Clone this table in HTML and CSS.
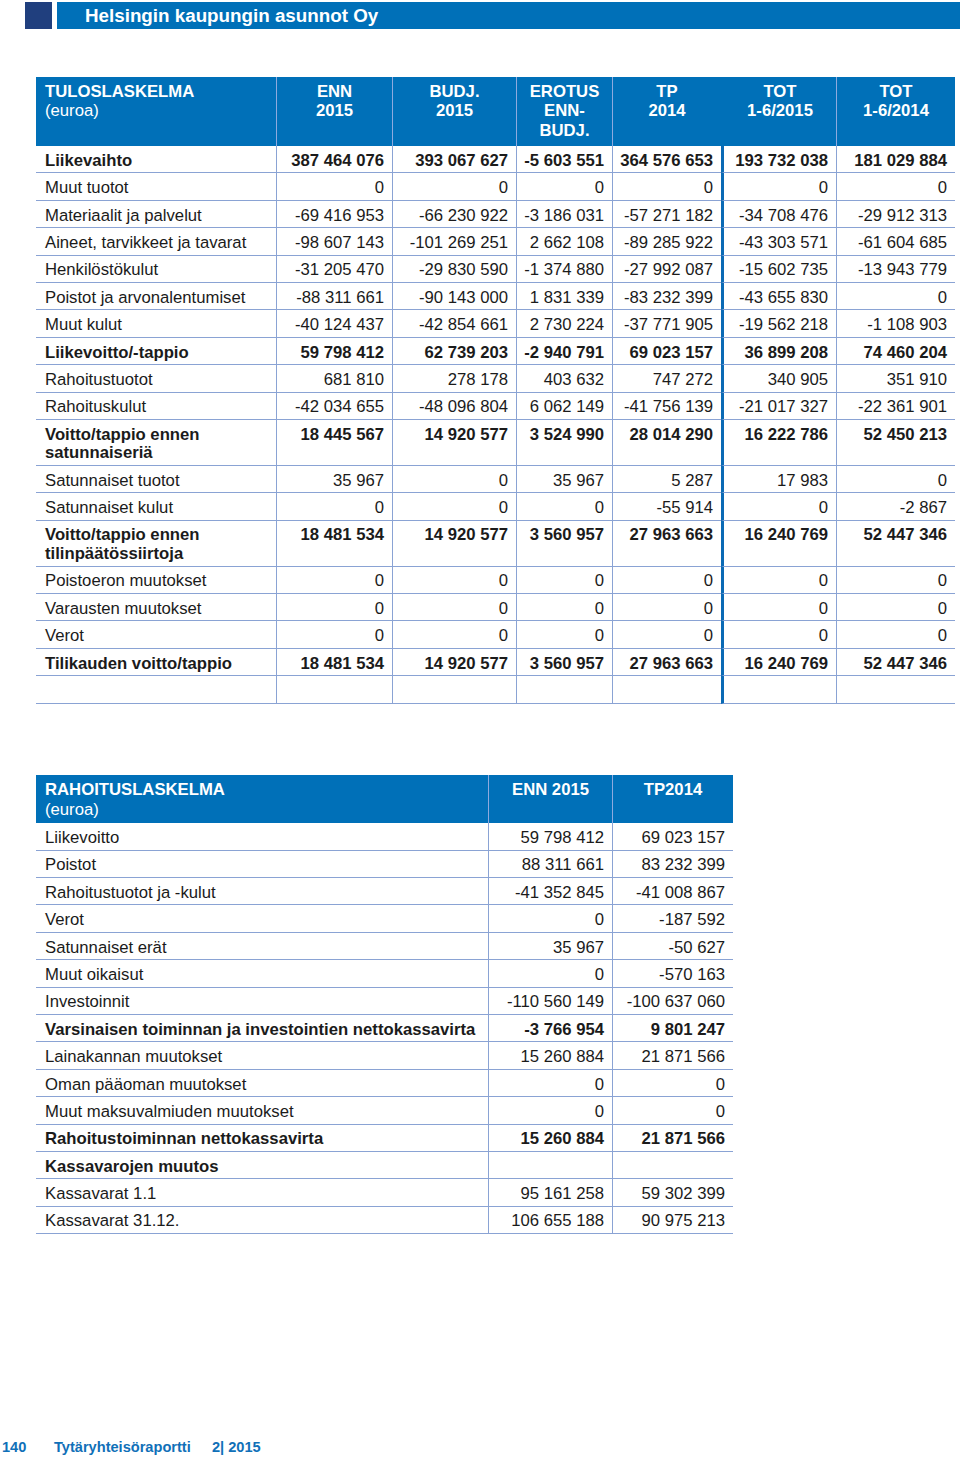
FILE: index.html
```html
<!DOCTYPE html>
<html lang="fi">
<head>
<meta charset="utf-8">
<title>Helsingin kaupungin asunnot Oy</title>
<link rel="stylesheet" href="styles.css">
</head>
<body>
<div class="page">
  <header class="topbar">
    <span class="topbar-square"></span>
    <div class="topbar-title">Helsingin kaupungin asunnot Oy</div>
  </header>

  <table class="fin fin-income">
    <colgroup>
      <col class="c-label"><col class="c-enn"><col class="c-budj"><col class="c-ero"><col class="c-tp"><col class="c-tot15"><col class="c-tot14">
    </colgroup>
    <thead>
      <tr>
        <th class="lbl">TULOSLASKELMA<br><span class="sub">(euroa)</span></th>
        <th>ENN<br>2015</th>
        <th>BUDJ.<br>2015</th>
        <th>EROTUS<br>ENN-<br>BUDJ.</th>
        <th>TP<br>2014</th>
        <th class="split">TOT<br>1-6/2015</th>
        <th>TOT<br>1-6/2014</th>
      </tr>
    </thead>
    <tbody>
      <tr class="b"><td>Liikevaihto</td><td>387 464 076</td><td>393 067 627</td><td>-5 603 551</td><td>364 576 653</td><td class="split">193 732 038</td><td>181 029 884</td></tr>
      <tr><td>Muut tuotot</td><td>0</td><td>0</td><td>0</td><td>0</td><td class="split">0</td><td>0</td></tr>
      <tr><td>Materiaalit ja palvelut</td><td>-69 416 953</td><td>-66 230 922</td><td>-3 186 031</td><td>-57 271 182</td><td class="split">-34 708 476</td><td>-29 912 313</td></tr>
      <tr><td>Aineet, tarvikkeet ja tavarat</td><td>-98 607 143</td><td>-101 269 251</td><td>2 662 108</td><td>-89 285 922</td><td class="split">-43 303 571</td><td>-61 604 685</td></tr>
      <tr><td>Henkilöstökulut</td><td>-31 205 470</td><td>-29 830 590</td><td>-1 374 880</td><td>-27 992 087</td><td class="split">-15 602 735</td><td>-13 943 779</td></tr>
      <tr><td>Poistot ja arvonalentumiset</td><td>-88 311 661</td><td>-90 143 000</td><td>1 831 339</td><td>-83 232 399</td><td class="split">-43 655 830</td><td>0</td></tr>
      <tr><td>Muut kulut</td><td>-40 124 437</td><td>-42 854 661</td><td>2 730 224</td><td>-37 771 905</td><td class="split">-19 562 218</td><td>-1 108 903</td></tr>
      <tr class="b"><td>Liikevoitto/-tappio</td><td>59 798 412</td><td>62 739 203</td><td>-2 940 791</td><td>69 023 157</td><td class="split">36 899 208</td><td>74 460 204</td></tr>
      <tr><td>Rahoitustuotot</td><td>681 810</td><td>278 178</td><td>403 632</td><td>747 272</td><td class="split">340 905</td><td>351 910</td></tr>
      <tr><td>Rahoituskulut</td><td>-42 034 655</td><td>-48 096 804</td><td>6 062 149</td><td>-41 756 139</td><td class="split">-21 017 327</td><td>-22 361 901</td></tr>
      <tr class="b"><td>Voitto/tappio ennen<br>satunnaiseriä</td><td>18 445 567</td><td>14 920 577</td><td>3 524 990</td><td>28 014 290</td><td class="split">16 222 786</td><td>52 450 213</td></tr>
      <tr><td>Satunnaiset tuotot</td><td>35 967</td><td>0</td><td>35 967</td><td>5 287</td><td class="split">17 983</td><td>0</td></tr>
      <tr><td>Satunnaiset kulut</td><td>0</td><td>0</td><td>0</td><td>-55 914</td><td class="split">0</td><td>-2 867</td></tr>
      <tr class="b"><td>Voitto/tappio ennen<br>tilinpäätössiirtoja</td><td>18 481 534</td><td>14 920 577</td><td>3 560 957</td><td>27 963 663</td><td class="split">16 240 769</td><td>52 447 346</td></tr>
      <tr><td>Poistoeron muutokset</td><td>0</td><td>0</td><td>0</td><td>0</td><td class="split">0</td><td>0</td></tr>
      <tr><td>Varausten muutokset</td><td>0</td><td>0</td><td>0</td><td>0</td><td class="split">0</td><td>0</td></tr>
      <tr><td>Verot</td><td>0</td><td>0</td><td>0</td><td>0</td><td class="split">0</td><td>0</td></tr>
      <tr class="b"><td>Tilikauden voitto/tappio</td><td>18 481 534</td><td>14 920 577</td><td>3 560 957</td><td>27 963 663</td><td class="split">16 240 769</td><td>52 447 346</td></tr>
      <tr class="empty"><td></td><td></td><td></td><td></td><td></td><td class="split"></td><td></td></tr>
    </tbody>
  </table>

  <table class="fin fin-cash">
    <colgroup>
      <col class="c2-label"><col class="c2-enn"><col class="c2-tp">
    </colgroup>
    <thead>
      <tr>
        <th class="lbl">RAHOITUSLASKELMA<br><span class="sub">(euroa)</span></th>
        <th>ENN 2015</th>
        <th>TP2014</th>
      </tr>
    </thead>
    <tbody>
      <tr><td>Liikevoitto</td><td>59 798 412</td><td>69 023 157</td></tr>
      <tr><td>Poistot</td><td>88 311 661</td><td>83 232 399</td></tr>
      <tr><td>Rahoitustuotot ja -kulut</td><td>-41 352 845</td><td>-41 008 867</td></tr>
      <tr><td>Verot</td><td>0</td><td>-187 592</td></tr>
      <tr><td>Satunnaiset erät</td><td>35 967</td><td>-50 627</td></tr>
      <tr><td>Muut oikaisut</td><td>0</td><td>-570 163</td></tr>
      <tr><td>Investoinnit</td><td>-110 560 149</td><td>-100 637 060</td></tr>
      <tr class="b"><td>Varsinaisen toiminnan ja investointien nettokassavirta</td><td>-3 766 954</td><td>9 801 247</td></tr>
      <tr><td>Lainakannan muutokset</td><td>15 260 884</td><td>21 871 566</td></tr>
      <tr><td>Oman pääoman muutokset</td><td>0</td><td>0</td></tr>
      <tr><td>Muut maksuvalmiuden muutokset</td><td>0</td><td>0</td></tr>
      <tr class="b"><td>Rahoitustoiminnan nettokassavirta</td><td>15 260 884</td><td>21 871 566</td></tr>
      <tr class="b"><td>Kassavarojen muutos</td><td></td><td></td></tr>
      <tr><td>Kassavarat 1.1</td><td>95 161 258</td><td>59 302 399</td></tr>
      <tr><td>Kassavarat 31.12.</td><td>106 655 188</td><td>90 975 213</td></tr>
    </tbody>
  </table>

  <footer class="pagefoot">
    <span class="pf-num">140</span>
    <span class="pf-title">Tytäryhteisöraportti</span>
    <span class="pf-issue">2| 2015</span>
  </footer>
</div>
</body>
</html>
```

FILE: styles.css
```css
html, body {
  margin: 0;
  padding: 0;
  background: #ffffff;
}

.page {
  width: 960px;
  height: 1459px;
  position: relative;
  font-family: "Liberation Sans", Arial, Helvetica, sans-serif;
  color: #1b1b1b;
  overflow: hidden;
}

/* top bar */
.topbar {
  display: flex;
  gap: 5px;
  margin: 2px 0 0 25px;
  height: 27px;
}
.topbar-square {
  width: 27px;
  height: 27px;
  background: #203f7e;
}
.topbar-title {
  flex: 1;
  background: #0070b8;
  color: #ffffff;
  font-weight: bold;
  font-size: 18.8px;
  line-height: 27px;
  padding-left: 28px;
}

/* tables */
.fin {
  border-collapse: separate;
  border-spacing: 0;
  table-layout: fixed;
  margin-left: 36px;
  font-size: 16.7px;
}
.fin th, .fin td {
  box-sizing: border-box;
  vertical-align: top;
  white-space: nowrap;
}
.fin thead th {
  background: #0070b8;
  color: #ffffff;
  font-weight: bold;
  text-align: center;
  line-height: 19.4px;
  padding: 5px 4px 0 4px;
  border-left: 1px solid #8eaadf;
}
.fin thead th.lbl {
  text-align: left;
  padding-left: 9px;
  border-left: none;
}
.fin thead .sub {
  font-weight: normal;
}
.fin tbody td {
  line-height: 18.6px;
  padding: 5.8px 8px 2px 4px;
  text-align: right;
  border-bottom: 1px solid #8aa3d4;
  border-left: 1px solid #8aa3d4;
}
.fin tbody td:first-child {
  text-align: left;
  padding-left: 9px;
  border-left: none;
}
.fin tbody tr.b td {
  font-weight: bold;
}

/* income statement */
.fin-income {
  width: 919px;
  margin-top: 48px;
}
.fin-income thead th {
  height: 69px;
}
.fin-income th.split {
  border-left: 3px solid #0070b8;
}
.fin-income td.split {
  border-left: 3px solid #0a6ab5;
}
.fin-income tr.empty td {
  height: 28px;
}
.c-label { width: 240px; }
.c-enn { width: 116px; }
.c-budj { width: 124px; }
.c-ero { width: 96px; }
.c-tp { width: 109px; }
.c-tot15 { width: 115px; }
.c-tot14 { width: 119px; }

/* cash flow statement */
.fin-cash {
  width: 697px;
  margin-top: 71px;
}
.fin-cash thead th {
  height: 48px;
}
.fin-cash tbody td {
  padding-left: 8px;
}
.c2-label { width: 452px; }
.c2-enn { width: 124px; }
.c2-tp { width: 121px; }

/* footer */
.pagefoot {
  display: flex;
  margin-top: 204px;
  padding-left: 2px;
  color: #1070b8;
  font-weight: bold;
  font-size: 14.6px;
  line-height: 18px;
}
.pf-num { width: 52px; }
.pf-title { width: 158px; }
```
